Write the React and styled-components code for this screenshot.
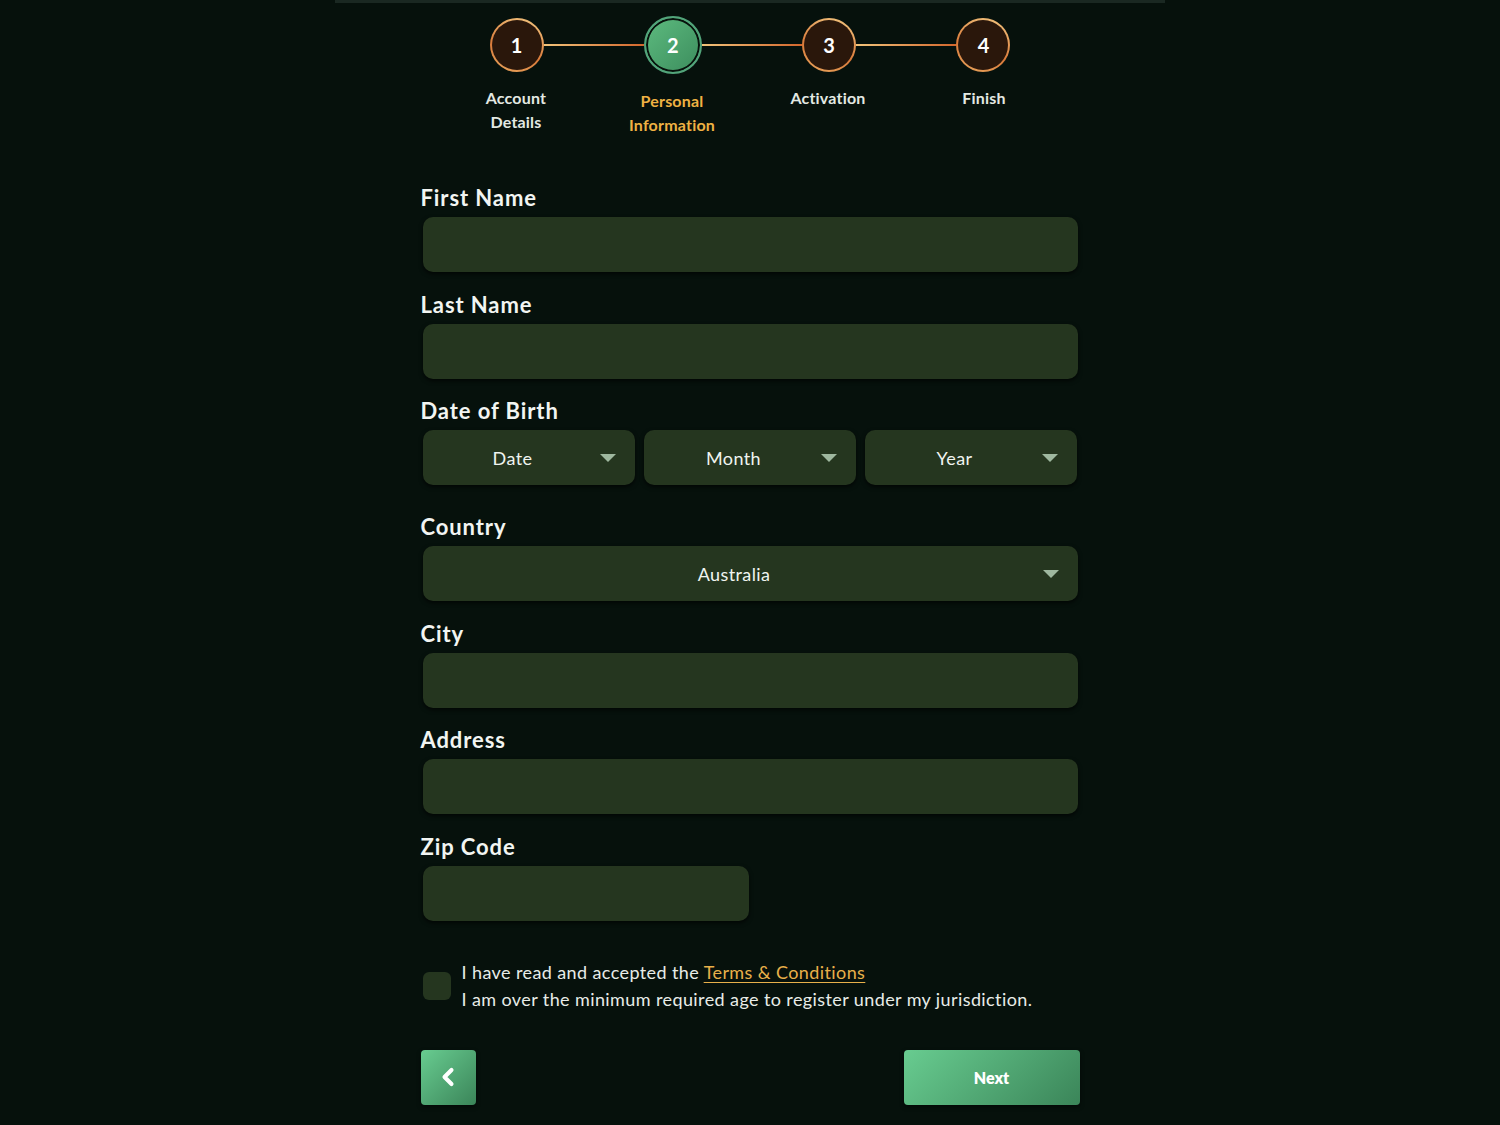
import styled, { createGlobalStyle } from "styled-components";
import { ChevronLeft } from "lucide-react";

const GlobalStyle = createGlobalStyle`
  body {
    margin: 0;
    background: #06110c;
    font-family: "Lato", "Noto Sans", sans-serif;
    color: #eef2ee;
  }
`;

const Page = styled.div`
  min-height: 100vh;
  display: flex;
  flex-direction: column;
  align-items: center;
`;

const TopEdge = styled.div`
  width: 830px;
  height: 3px;
  background: #1a2822;
`;

const Stepper = {
  Track: styled.div`
    display: flex;
    align-items: center;
    width: 521px;
    height: 58px;
    margin-top: 13px;
  `,
  Line: styled.div`
    flex: 1;
    height: 2px;
    background: linear-gradient(90deg, #f1c37a, #d2672d);
  `,
  Labels: styled.div`
    display: grid;
    grid-template-columns: repeat(4, 156px);
    margin-top: 12px;
  `,
  Label: styled.div`
    text-align: center;
    font-size: 16px;
    font-weight: 700;
    line-height: 24px;
    letter-spacing: 0.2px;
    color: ${(p) => (p.$active ? "#efb243" : "#e3e9e3")};
    margin-top: ${(p) => (p.$active ? "3px" : "0")};
  `,
};

const Circle = styled.div`
  width: 50px;
  height: 50px;
  border-radius: 50%;
  border: 2px solid transparent;
  background:
    linear-gradient(#2a170b, #2a170b) padding-box,
    linear-gradient(200deg, #f3c983, #d97a3a 60%, #e9a860) border-box;
  display: flex;
  align-items: center;
  justify-content: center;
  font-size: 20px;
  font-weight: 700;
  color: #ffffff;
`;

const ActiveCircle = styled(Circle)`
  width: 54px;
  height: 54px;
  border: 2px solid #52a47a;
  background: linear-gradient(135deg, #5dbb7f, #3c8d5d);
  box-shadow: inset 0 0 0 2px #07120c;
`;

const Form = styled.div`
  width: 659px;
  margin-top: 47px;
  display: flex;
  flex-direction: column;
`;

const Label = styled.div`
  font-size: 22px;
  font-weight: 700;
  line-height: 28px;
  letter-spacing: 0.9px;
  color: #f2f5f2;
  margin-bottom: 5px;
`;

const Field = styled.div`
  display: flex;
  flex-direction: column;
  margin-bottom: ${(p) => p.$gap || "18.6px"};
`;

const Input = styled.input`
  box-sizing: border-box;
  width: ${(p) => p.$width || "655px"};
  height: 55px;
  margin-left: 2px;
  border: none;
  border-radius: 10px;
  background: #25361f;
  box-shadow: 0 2px 4px rgba(0, 0, 0, 0.7);
  outline: none;
  color: #fff;
  font: inherit;
  padding: 0 16px;
`;

const SelectRow = styled.div`
  display: grid;
  grid-template-columns: ${(p) => (p.$single ? "655px" : "repeat(3, 212px)")};
  gap: 9px;
  margin-left: 2px;
`;

const Select = styled.div`
  position: relative;
  box-sizing: border-box;
  height: 55px;
  border-radius: 10px;
  background: #25361f;
  box-shadow: 0 2px 4px rgba(0, 0, 0, 0.7);
  display: flex;
  align-items: center;
  justify-content: center;
  padding-right: 32px;
  font-size: 18px;
  letter-spacing: 0.4px;
  color: #f0f4f0;
`;

const Arrow = styled.span`
  position: absolute;
  right: 19px;
  top: 50%;
  margin-top: -4px;
  width: 0;
  height: 0;
  border-left: 8px solid transparent;
  border-right: 8px solid transparent;
  border-top: 8px solid #9fb89f;
`;

const Agree = styled.div`
  display: flex;
  align-items: center;
  gap: 11px;
  margin-top: 19px;
  margin-left: 2px;
`;

const Check = styled.div`
  width: 28px;
  height: 28px;
  border-radius: 6px;
  background: #25361f;
  flex-shrink: 0;
`;

const AgreeText = styled.div`
  font-size: 18px;
  line-height: 27px;
  letter-spacing: 0.4px;
  color: #e8ece8;
`;

const TermsLink = styled.a`
  color: #e8b04a;
  text-decoration: underline;
  text-underline-offset: 3px;
`;

const Actions = styled.div`
  display: flex;
  justify-content: space-between;
  margin-top: 37px;
`;

const GreenButton = styled.button`
  height: 55px;
  width: ${(p) => p.$width};
  border: none;
  border-radius: 4px;
  background: linear-gradient(135deg, #68cc90, #3b8559);
  color: #fff;
  font-family: inherit;
  font-size: 16px;
  font-weight: 800;
  display: flex;
  align-items: center;
  justify-content: center;
  cursor: pointer;
  box-shadow: 0 2px 4px rgba(0, 0, 0, 0.5);
`;

const steps = ["Account\nDetails", "Personal\nInformation", "Activation", "Finish"];

function TextField({ label, width }) {
  return (
    <Field>
      <Label>{label}</Label>
      <Input $width={width} />
    </Field>
  );
}

export default function App() {
  return (
    <>
      <GlobalStyle />
      <Page>
        <TopEdge />
        <Stepper.Track>
          <Circle>1</Circle>
          <Stepper.Line />
          <ActiveCircle>2</ActiveCircle>
          <Stepper.Line />
          <Circle>3</Circle>
          <Stepper.Line />
          <Circle>4</Circle>
        </Stepper.Track>
        <Stepper.Labels>
          {steps.map((s, i) => (
            <Stepper.Label key={s} $active={i === 1}>
              {s.split("\n").map((line) => (
                <div key={line}>{line}</div>
              ))}
            </Stepper.Label>
          ))}
        </Stepper.Labels>

        <Form>
          <TextField label="First Name" />
          <TextField label="Last Name" />
          <Field $gap="28px">
            <Label>Date of Birth</Label>
            <SelectRow>
              {["Date", "Month", "Year"].map((t) => (
                <Select key={t}>
                  {t}
                  <Arrow />
                </Select>
              ))}
            </SelectRow>
          </Field>
          <Field>
            <Label>Country</Label>
            <SelectRow $single>
              <Select>
                Australia
                <Arrow />
              </Select>
            </SelectRow>
          </Field>
          <TextField label="City" />
          <TextField label="Address" />
          <TextField label="Zip Code" width="326px" />

          <Agree>
            <Check />
            <AgreeText>
              I have read and accepted the <TermsLink>Terms &amp; Conditions</TermsLink>
              <br />
              I am over the minimum required age to register under my jurisdiction.
            </AgreeText>
          </Agree>

          <Actions>
            <GreenButton $width="55px">
              <ChevronLeft size={28} strokeWidth={3.5} />
            </GreenButton>
            <GreenButton $width="176px">Next</GreenButton>
          </Actions>
        </Form>
      </Page>
    </>
  );
}
